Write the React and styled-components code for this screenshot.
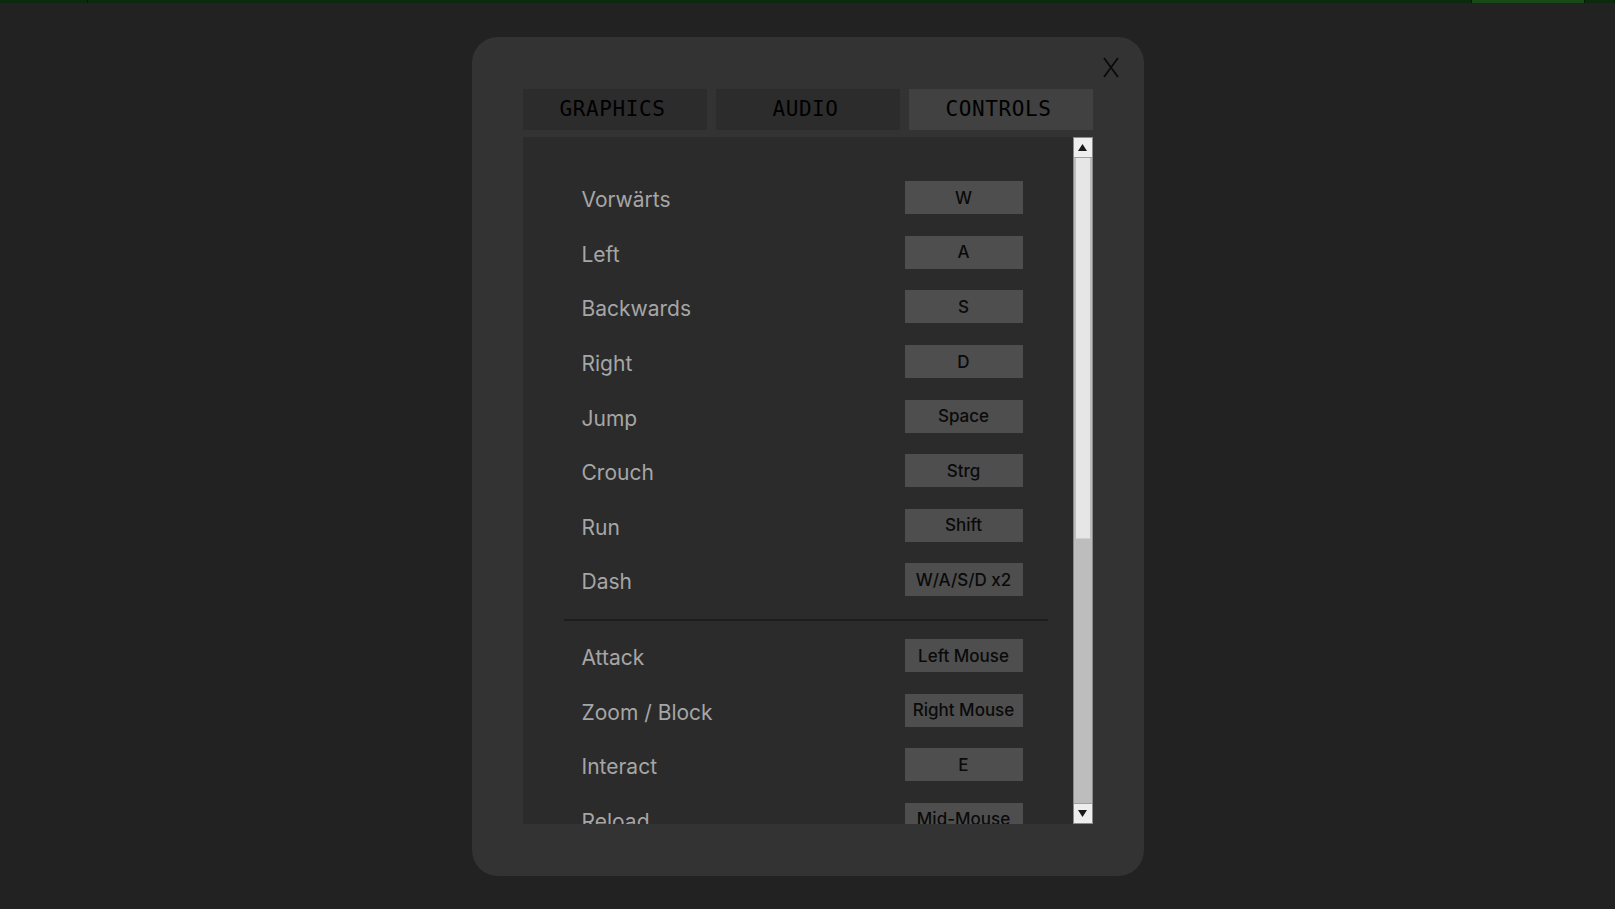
import React, { useState } from "react";
import styled, { createGlobalStyle } from "styled-components";

const bindings = [
  { action: "Vorwärts", key: "W" },
  { action: "Left", key: "A" },
  { action: "Backwards", key: "S" },
  { action: "Right", key: "D" },
  { action: "Jump", key: "Space" },
  { action: "Crouch", key: "Strg" },
  { action: "Run", key: "Shift" },
  { action: "Dash", key: "W/A/S/D x2" },
  null,
  { action: "Attack", key: "Left Mouse" },
  { action: "Zoom / Block", key: "Right Mouse" },
  { action: "Interact", key: "E" },
  { action: "Reload", key: "Mid-Mouse" },
  { action: "Inventory", key: "Tab" },
  { action: "Map", key: "M" },
  { action: "Pause", key: "Esc" },
];

const tabs = ["GRAPHICS", "AUDIO", "CONTROLS"];

const App = () => {
  const [tab, setTab] = useState("CONTROLS");

  return (
    <>
      <GlobalStyle />
      <Page>
        <StatusBar>
          <Segment $w="87px" />
          <Segment $grow />
          <Segment $w="112px" $lit />
          <Segment $grow2 />
        </StatusBar>
        <Stage>
          <Modal>
            <Close aria-label="close">
              <svg width="16" height="21" viewBox="0 0 16 21">
                <path d="M1 1 L15 20 M15 1 L1 20" stroke="#0a0a0a" strokeWidth="1.8" fill="none" />
              </svg>
            </Close>
            <Tabs>
              {tabs.map((t) => (
                <Tab key={t} $active={t === tab} onClick={() => setTab(t)}>
                  {t}
                </Tab>
              ))}
            </Tabs>
            <Panel>
              <List>
                {bindings.map((b, i) =>
                  b ? (
                    <Row key={b.action}>
                      <Label>{b.action}</Label>
                      <KeyButton>{b.key}</KeyButton>
                    </Row>
                  ) : (
                    <Divider key={"sep" + i} />
                  )
                )}
              </List>
              <Scrollbar>
                <Arrow>
                  <svg width="9" height="7" viewBox="0 0 9 7">
                    <path d="M4.5 0 L9 7 L0 7 Z" fill="#1a1a1a" />
                  </svg>
                </Arrow>
                <Track>
                  <Thumb style={{ height: "59%" }} />
                </Track>
                <Arrow $down>
                  <svg width="9" height="7" viewBox="0 0 9 7">
                    <path d="M0 0 L9 0 L4.5 7 Z" fill="#1a1a1a" />
                  </svg>
                </Arrow>
              </Scrollbar>
            </Panel>
          </Modal>
        </Stage>
      </Page>
    </>
  );
};

export default App;

const GlobalStyle = createGlobalStyle`
  html, body {
    margin:0;
    padding:0;
    background:#222222;
  }
  body {
    font-family:Inter, "Noto Sans", sans-serif;
  }
`;

const Page = styled.div`
  height:909px;
  display:flex;
  flex-direction:column;
  background:#222222;
`;

const StatusBar = styled.div`
  height:3px;
  display:flex;
  background:#0b260b;
`;

const Segment = styled.div`
  width:${(p) => p.$w || "auto"};
  flex:${(p) => (p.$grow ? "1" : p.$grow2 ? "0 0 29px" : "none")};
  background:${(p) => (p.$lit ? "#174a17" : "#0c2a0c")};
  border-right:1px solid #071a07;
`;

const Stage = styled.div`
  flex:1;
  display:flex;
  align-items:center;
  justify-content:center;
`;

const Modal = styled.div`
  position:relative;
  width:672px;
  height:839px;
  box-sizing:border-box;
  padding:52px 51px;
  background:#333333;
  border-radius:26px;
  display:flex;
  flex-direction:column;
`;

const Close = styled.button`
  position:absolute;
  top:20px;
  right:25px;
  padding:0;
  border:none;
  background:transparent;
  cursor:pointer;
  line-height:0;
`;

const Tabs = styled.div`
  display:grid;
  grid-template-columns:repeat(3, 1fr);
  gap:9px;
  height:41px;
  margin-bottom:7px;
`;

const Tab = styled.button`
  border:none;
  background:${(p) => (p.$active ? "#414141" : "#2c2c2c")};
  color:#000;
  font-family:"DejaVu Sans Mono", "Liberation Mono", monospace;
  font-size:21px;
  letter-spacing:0.6px;
  padding:0 4px 0 0;
  cursor:pointer;
`;

const Panel = styled.div`
  flex:1;
  display:flex;
  background:#2b2b2b;
  overflow:hidden;
`;

const List = styled.div`
  flex:1;
  padding:34px 25px 0 41px;
  overflow:hidden;
`;

const Row = styled.div`
  height:54.6px;
  display:flex;
  align-items:center;
  justify-content:space-between;
  padding:0 25px 0 18px;
`;

const Label = styled.span`
  color:#a6a6a6;
  font-size:21px;
  padding-top:4px;
`;

const KeyButton = styled.div`
  width:118px;
  height:33px;
  display:flex;
  align-items:center;
  justify-content:center;
  background:#4e4e4e;
  color:#0a0a0a;
  font-size:17px;
  font-weight:500;
`;

const Divider = styled.div`
  height:2px;
  background:#1d1d1d;
  margin:12px 0 7px;
`;

const Scrollbar = styled.div`
  width:20px;
  display:flex;
  flex-direction:column;
  box-sizing:border-box;
  border:1px solid #8a8a8a;
  background:#bdbdbd;
`;

const Arrow = styled.div`
  height:19px;
  flex:none;
  display:flex;
  align-items:center;
  justify-content:center;
  background:#eeeeee;
  border-${(p) => (p.$down ? "top" : "bottom")}:1px solid #a0a0a0;
`;

const Track = styled.div`
  flex:1;
  padding:0 2px;
`;

const Thumb = styled.div`
  background:#e6e6e6;
  border-bottom:1px solid #d0d0d0;
`;
